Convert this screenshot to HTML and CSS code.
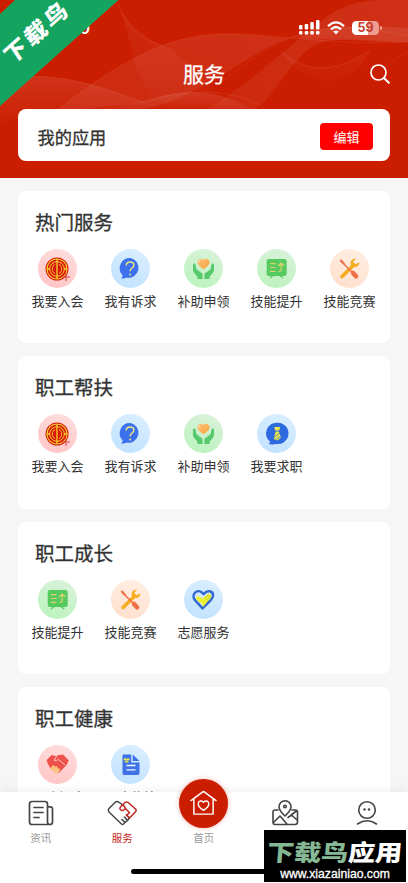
FILE: index.html
```html
<!DOCTYPE html>
<html lang="zh-CN">
<head>
<meta charset="utf-8">
<meta name="viewport" content="width=device-width, initial-scale=1">
<title>服务</title>
<link rel="stylesheet" href="styles.css">
</head>
<body>
<svg class="defs" aria-hidden="true">
  <defs>
    <linearGradient id="heartOrange" x1="0" y1="0" x2="1" y2="1"><stop offset="0" stop-color="#ffc078"/><stop offset="1" stop-color="#f9a23c"/></linearGradient>
    <symbol id="i-union" viewBox="0 0 39 39">
      <circle cx="19" cy="20" r="11.5" fill="#d8170c"/>
      <g fill="none" stroke="#f6d42c"><circle cx="19" cy="20" r="10" stroke-width="1.1"/><circle cx="19" cy="20" r="7.300" stroke-width="1"/><path d="M17 15.500c-3.500 1-3.500 8 0 9M21 15.500c3.500 1 3.500 8 0 9" stroke-width=".9"/><path d="M19 10v20M9 20h3M26 20h3" stroke-width="1.300"/></g>
      <path d="M28 24v8M24 28h8" stroke="#d94a45" stroke-width="1.100"/>
    </symbol>
    <symbol id="i-ask" viewBox="0 0 39 39">
      <path d="M19.500 9a10 10 0 1 1-4 19.600c-1.500.9-3.800 1.200-5.500.9 1-1 1.600-2 1.600-3.200A10.200 10.200 0 0 1 19.500 9z" fill="#3d70ec"/>
      <path d="M15.200 16.500c0-2.200 1.600-3.500 3.900-3.500s3.800 1.300 3.800 3.200c0 2.900-3.800 2.800-3.800 6.100" fill="none" stroke="#e9e77b" stroke-width="1.500"/><circle cx="19.100" cy="25.400" r="1" fill="#e9e77b"/>
    </symbol>
    <symbol id="i-aid" viewBox="0 0 39 39">
      <path d="M9 15.500c0-1.500 2.200-1.500 2.500 0l.8 4.300 4.500 3.200c1.300 1 1.800 2 1.800 3.700v3.200h-5.200v-2.200l-3.500-4.200c-.6-.7-.9-1.500-.9-2.400zM30 15.500c0-1.500-2.200-1.500-2.500 0l-.8 4.300-4.500 3.200c-1.300 1-1.800 2-1.800 3.700v3.200h5.200v-2.200l3.500-4.200c.6-.7.9-1.500.9-2.400z" fill="#55c96c"/>
      <path d="M12.500 19.500l4.300 4M26.500 19.500l-4.300 4" stroke="#c9f0cb" stroke-width=".8"/>
      <path d="M19.500 20.200c-3-2-6-4-6-6.900 0-3.600 4.300-4.700 6-2 1.700-2.700 6-1.600 6 2 0 2.900-3 4.900-6 6.900z" fill="url(#heartOrange)"/>
      <path d="M15 13.300c0-1 .5-1.700 1.300-1.900" stroke="#fff" stroke-width=".8" fill="none"/>
    </symbol>
    <symbol id="i-skill" viewBox="0 0 39 39">
      <rect x="9.700" y="10" width="20" height="17" rx="2.200" fill="#56c961"/>
      <path d="M17 26l-4.200 3M22 26l4.200 3" stroke="#56c961" stroke-width="1.200"/>
      <path d="M13 14.700h5.500M13 18.500h5.500M13 22.300h5.500M21.500 22.300h1.200c1 0 1.500-.5 1.500-1.500v-6M21.200 17l3-3 3 3" fill="none" stroke="#dcd46b" stroke-width="1.200"/>
    </symbol>
    <symbol id="i-tools" viewBox="0 0 39 39">
      <path d="M12 27.500L24 15.800" stroke="#f5ad20" stroke-width="3.600" stroke-linecap="round"/>
      <path d="M26.300 9.800c-3.500-.8-6.100 1.700-5.600 4.900.6 3.300 4.700 4.500 7.200 2.300 1.100-1 1.500-2.400 1.300-3.900l-3 2.100-2.200-.7-.7-2.100z" fill="#f5ad20"/>
      <path d="M11 12.300L22.500 23.500" stroke="#ef7046" stroke-width="1.600"/><path d="M9.700 11.200l1.700-.9 3.600 4.200-1 1-3.500-2.700z" fill="#ef7046"/>
      <path d="M23 24l3 3.200" stroke="#ef7046" stroke-width="4.600" stroke-linecap="round"/>
    </symbol>
    <symbol id="i-job" viewBox="0 0 39 39">
      <path d="M20.500 8.700a10.700 10.700 0 1 1-1.800 21.200c-2 .8-5.300.8-7.200.2 1-.6 1.500-1.400 1.400-2.600A10.700 10.700 0 0 1 20.500 8.700z" fill="#2d69df"/>
      <path d="M17.200 13h6l-1 3.500h-4z" fill="#efe748"/><path d="M18.700 17.500h3l2.200 5.700-3.200 3.300-4-1.500z" fill="#efe748"/><path d="M17 23.500l5-4M18.500 25.500l5-3" stroke="#2d69df" stroke-width=".7"/>
    </symbol>
    <symbol id="i-volunteer" viewBox="0 0 39 39">
      <path d="M18.500 28.300L11 20.200c-4.400-5.200 2-12.200 7.200-7.500l1.400 1.400c3.800-4.700 9.700-3.400 9.400 1.400-.1 2.300-1.900 4.300-3.700 6.200z" fill="#d3e8ff" stroke="#3269d1" stroke-width="2.500" stroke-linejoin="round"/>
      <path d="M11.500 17.500c2-2 4-1.200 6.500 1l6.500-5c1-.6 1.700.2 1.200 1 1-.4 1.600.5 1 1.200.9 0 1.200.8.6 1.500L19 27l-1-3.500c-2.500-.5-5-2.500-6.500-6z" fill="#efef32"/>
      <path d="M21 18l4-3.500M22 20l5-4M22.500 22.300l4-3.300" stroke="#9caf45" stroke-width=".6"/>
    </symbol>
    <symbol id="i-shake" viewBox="0 0 39 39">
      <path d="M8.700 15l5-5 4.500 1.200 2-.9 4.800-.8 5.800 6.100-2.300 4.300-7.200 7.600-3.500.5-6-5.500-2.300-4.500z" fill="#ee504b"/>
      <path d="M13.500 21.500l1.800-1.500 1.800 1.500 1.500-.6 1.600 2.300 1.500.3.500 2-3.700 3.500-6.300-5.300z" fill="#fdbd79"/>
      <path d="M18.500 11.500l-2.300 3.800c1.600 1.200 3 .3 4-.9l6.800 5.500M17 24l-2 2M19.500 25l-1.700 2.300" fill="none" stroke="#ffdad4" stroke-width=".9"/>
    </symbol>
    <symbol id="i-report" viewBox="0 0 39 39">
      <path d="M12.500 9.500h7.700v8h8.300v10.800c0 1-.7 1.700-1.700 1.700H13c-1 0-1.500-.7-1.500-1.700V10.500c0-.6.4-1 1-1z" fill="#3f73e5"/><path d="M21.700 9.500l6.800 6.500h-6.800z" fill="#3f73e5"/>
      <path d="M15.500 20.500h9M15.500 24.800h9" stroke="#f4f8ff" stroke-width="1.300"/>
      <path d="M15.700 18c-5-3.300-2.800-6.200 0-4.200 2.800-2 5 .9 0 4.200z" fill="#e5e957"/><path d="M13 15.500h2l.7 1 .8-1h2" fill="none" stroke="#5878a8" stroke-width=".7"/>
    </symbol>
  </defs>
</svg>

<div class="phone">
  <header class="header">
    <svg class="waves" viewBox="0 0 408 178" aria-hidden="true">
      <defs>
        <linearGradient id="wa" x1="0" y1="0" x2="0" y2="1"><stop offset="0" stop-color="#fff" stop-opacity=".1"/><stop offset="1" stop-color="#fff" stop-opacity=".02"/></linearGradient>
        <linearGradient id="wb" x1="1" y1="0" x2="0" y2="1"><stop offset="0" stop-color="#fff" stop-opacity=".09"/><stop offset="1" stop-color="#fff" stop-opacity=".05"/></linearGradient>
      </defs>
      <path d="M0 78C60 70 105 88 145 103C105 105 65 112 0 122z" fill="url(#wa)"/>
      <path d="M55 112C115 65 165 34 225 34C260 34 275 38 290 38C240 55 190 110 120 112z" fill="url(#wb)"/>
      <path d="M290 38C325 25 365 25 408 28V42C370 43 330 38 290 38z" fill="url(#wb)"/>
      <path d="M117 2C130 35 160 42 178 55C210 80 225 112 265 108C215 122 170 116 147 88C130 68 132 34 117 2z" fill="url(#wa)" opacity=".6"/>
      <path d="M204 112C260 75 290 45 325 18Q350 0 380 0H408V42C370 43 330 32 307 50C284 70 274 100 250 112z" fill="url(#wb)"/>
      <path d="M280 50C305 72 335 74 370 50C350 95 310 90 280 50z" fill="url(#wa)" opacity=".5"/>
      <path d="M110 110C170 92 205 83 250 108H110z" fill="url(#wa)"/>
      <g fill="none" stroke="#fff" stroke-opacity=".09" stroke-width=".8"><path d="M55 112C115 65 165 34 225 34S330 46 408 42"/><path d="M118 4C132 40 155 42 175 52"/><path d="M280 50C305 74 335 74 370 50"/><path d="M0 78C60 70 105 88 145 103Q170 92 204 92T265 108"/><path d="M219 84C255 55 285 35 318 30S380 30 408 36"/><path d="M385 70Q394 58 408 52"/></g>
    </svg>
    <div class="status">
      <span class="time">8:50</span>
      <div class="status-icons">
        <svg width="21" height="15" viewBox="0 0 21 15" fill="#fff"><rect x="0" y="5" width="3.500" height="4.500" rx="1"/><rect x="5.700" y="4" width="3.500" height="5.500" rx="1"/><rect x="11.300" y="2" width="3.500" height="7.500" rx="1"/><rect x="17" y="0" width="3.500" height="9.500" rx="1"/><rect x="0" y="11" width="3.500" height="3.500" rx="1"/><rect x="5.700" y="11" width="3.500" height="3.500" rx="1"/><rect x="11.300" y="11" width="3.500" height="3.500" rx="1"/><rect x="17" y="11" width="3.500" height="3.500" rx="1"/></svg>
        <svg width="18" height="14" viewBox="0 0 18 14"><g fill="none" stroke="#fff" stroke-width="2.300"><path d="M1 5.200Q9-2.500 17 5.200"/><path d="M4 8.300Q9 3.700 14 8.300"/></g><path d="M6.200 10.600Q9 8.400 11.800 10.600L9 13.500z" fill="#fff"/></svg>
        <div class="battery"><span>59</span></div>
      </div>
    </div>
    <div class="title-row">
      <h1>服务</h1>
      <svg class="search" viewBox="0 0 20 20"><circle cx="8.500" cy="8.500" r="7.500" fill="none" stroke="#fff" stroke-width="1.700"/><path d="M14 14l4.800 4.800" stroke="#fff" stroke-width="2" stroke-linecap="round"/></svg>
    </div>
    <div class="my-apps"><span>我的应用</span><button class="edit">编辑</button></div>
  </header>

  <main class="sections">
    <section class="card">
      <h2>热门服务</h2>
      <div class="grid">
        <div class="app"><svg class="disc pink"><use href="#i-union"/></svg><span>我要入会</span></div>
        <div class="app"><svg class="disc blue"><use href="#i-ask"/></svg><span>我有诉求</span></div>
        <div class="app"><svg class="disc green"><use href="#i-aid"/></svg><span>补助申领</span></div>
        <div class="app"><svg class="disc green"><use href="#i-skill"/></svg><span>技能提升</span></div>
        <div class="app"><svg class="disc peach"><use href="#i-tools"/></svg><span>技能竞赛</span></div>
      </div>
    </section>
    <section class="card">
      <h2>职工帮扶</h2>
      <div class="grid">
        <div class="app"><svg class="disc pink"><use href="#i-union"/></svg><span>我要入会</span></div>
        <div class="app"><svg class="disc blue"><use href="#i-ask"/></svg><span>我有诉求</span></div>
        <div class="app"><svg class="disc green"><use href="#i-aid"/></svg><span>补助申领</span></div>
        <div class="app"><svg class="disc blue"><use href="#i-job"/></svg><span>我要求职</span></div>
      </div>
    </section>
    <section class="card">
      <h2>职工成长</h2>
      <div class="grid">
        <div class="app"><svg class="disc green"><use href="#i-skill"/></svg><span>技能提升</span></div>
        <div class="app"><svg class="disc peach"><use href="#i-tools"/></svg><span>技能竞赛</span></div>
        <div class="app"><svg class="disc blue"><use href="#i-volunteer"/></svg><span>志愿服务</span></div>
      </div>
    </section>
    <section class="card">
      <h2>职工健康</h2>
      <div class="grid">
        <div class="app"><svg class="disc pink"><use href="#i-shake"/></svg><span>互助保障</span></div>
        <div class="app"><svg class="disc blue"><use href="#i-report"/></svg><span>工疗休检</span></div>
      </div>
    </section>
  </main>

  <nav class="tabs">
    <div class="tab"><svg viewBox="0 0 28 28" fill="none" stroke="#444" stroke-width="1.700" stroke-linecap="round" stroke-linejoin="round"><path d="M20.500 22.500V5Q20.500 2.500 18 2.500H5Q2.500 2.500 2.500 5v18Q2.500 25.500 5 25.500h18q2.500 0 2.500-2.500V10q0-2.200-2.200-2.200h-2.800M20.500 19v4q0 2.500 2.500 2.500M7 8.500h9M7 13.500h9M7 18.500h5"/></svg><span>资讯</span></div>
    <div class="tab active"><svg class="wide" viewBox="0 0 30 28" fill="none" stroke="#444" stroke-width="1.500" stroke-linejoin="round" stroke-linecap="round"><path d="M15 5.500L11.500 3Q9.500 2 8 3.500L2 9.500Q.7 11 2 13L14.500 25q1 .8 2 0l1.500-1.500-3-3M18 23.500l2.500-2-3-3.500M20.500 21.500l2-2.500-3-3"/><path d="M13.500 8L18 3.500q1.500-1.200 3.200 0L28.500 10q1.300 1.300 0 2.800l-6 6.200M13.500 8q-1.500 2.200.8 3.200 2 .8 4.200-1.700l4 4.300-3 2.200 3 3M16 5.500l2.500 4" stroke="#bd2720"/></svg><span>服务</span></div>
    <div class="tab home"><div class="home-disc"><svg viewBox="0 0 30 28" fill="none" stroke="#fff" stroke-width="1.500" stroke-linecap="round" stroke-linejoin="round"><path d="M2 11L15 1.500 28 11M5 9.500V25h20V9.500"/><path d="M15 21C5.500 15.500 10.500 8.500 15 12.800 19.500 8.500 24.500 15.500 15 21z"/></svg></div><span>首页</span></div>
    <div class="tab"><svg class="wide" viewBox="0 0 30 28" fill="none" stroke="#444" stroke-width="1.600" stroke-linecap="round" stroke-linejoin="round"><path d="M15 17Q9 11.500 9 7.800a6 6 0 0 1 12 0Q21 11.500 15 17zM8 11H5q-2 0-2 2v10q0 2.500 2 2.500h20q2.500 0 2.500-2.500V13q0-2-2-2H22M4 23l6-6 7 8M18 18.500l3.500-2.500 5.500 5M21 16l5.500-4"/><circle cx="15" cy="7.500" r="1.300"/></svg></div>
    <div class="tab"><svg viewBox="0 0 28 28" fill="none" stroke="#444" stroke-width="1.600" stroke-linecap="round"><circle cx="14" cy="11" r="8.300"/><path d="M4.500 25q9.500-6.500 19 0"/><g fill="#444" stroke="none"><circle cx="11.500" cy="10.500" r="1.200"/><circle cx="16" cy="10.500" r="1.200"/></g></svg></div>
  </nav>
  <div class="home-indicator"></div>
  <div class="ribbon"><span>下载鸟</span></div>
  <div class="watermark"><div class="brand"><b>下载鸟</b><b class="light">应用</b></div><div class="url">www.xiazainiao.com</div></div>
</div>
</body>
</html>
```
FILE: styles.css
```css
* { box-sizing: border-box; }
body { margin: 0; font-family: "Noto Sans CJK SC", "Liberation Sans", sans-serif; color: #333; }
h1, h2 { margin: 0; font-weight: 400; }
.defs { position: absolute; width: 0; height: 0; }
.phone { position: relative; width: 408px; height: 883px; overflow: hidden; background: #f6f6f6; }

.header { position: relative; height: 178px; padding: 0 18px; background: #cb1d00; overflow: hidden; }
.waves { position: absolute; inset: 0; width: 408px; height: 178px; }
.status { position: relative; height: 54px; padding: 20px 10px 0 36px; display: flex; justify-content: space-between; align-items: flex-start; }
.time { color: #fff; font: 600 16px/17px Inter, sans-serif; }
.status-icons { display: flex; align-items: center; gap: 7px; height: 15px; margin-right: 1px; }
.battery { position: relative; width: 27px; height: 14px; border-radius: 4.500px; background: linear-gradient(90deg, #fff 59%, #ee9d91 59%); display: flex; justify-content: center; font: 700 12.500px/14px Inter, sans-serif; color: #c93b2b; }
.battery::after { content: ""; position: absolute; left: 28px; top: 5px; width: 1.500px; height: 4px; border-radius: 1px; background: #ee9d91; }
.title-row { position: relative; height: 55px; padding-bottom: 18px; display: flex; align-items: center; justify-content: center; }
h1 { color: #fff; font-size: 21px; line-height: 30px; -webkit-text-stroke: .3px #fff; }
.search { position: absolute; right: 0; top: 10px; width: 20px; height: 20px; }
.my-apps { position: relative; height: 52px; border-radius: 8px; background: #fff; padding: 3px 17px 0 19.500px; display: flex; align-items: center; justify-content: space-between; font-size: 17.200px; -webkit-text-stroke: .3px #333; }
.my-apps span { margin-top: -1px; }
.edit { width: 53px; height: 27px; border: 0; border-radius: 4px; background: #fe0000; color: #fff; font: 13px/26px "Noto Sans CJK SC", sans-serif; padding: 0; -webkit-text-stroke: 0; }

.sections { padding: 13px 18px 0; display: flex; flex-direction: column; gap: 13px; }
.card { height: 152.300px; border-radius: 8px; background: #fff; padding: 16px 3.500px 0; flex: none; }
.card h2 { font-size: 19.500px; line-height: 30px; padding-left: 13.500px; -webkit-text-stroke: .3px #333; }
.grid { display: grid; grid-template-columns: repeat(5, 73px); margin-top: 12px; margin-left: -.5px; }
.app { display: flex; flex-direction: column; align-items: center; }
.app span { font-size: 13px; line-height: 18px; margin-top: 4px; white-space: nowrap; }
.disc { width: 39px; height: 39px; border-radius: 50%; }
.pink { background: linear-gradient(20deg, #ffc3c3, #ffdfdf); }
.blue { background: linear-gradient(20deg, #bfe1ff, #dcefff); }
.green { background: linear-gradient(20deg, #b9f3bb, #dcf2dc); }
.peach { background: linear-gradient(20deg, #ffdecb, #fff0e5); }

.tabs { position: absolute; left: 0; right: 0; top: 792px; height: 91px; background: #fff; display: grid; grid-template-columns: repeat(5, 81.500px); box-shadow: 0 -3px 8px rgba(0,0,0,.05); }
.tab { display: flex; flex-direction: column; align-items: center; padding-top: 7px; font-size: 10.500px; color: #999; }
.tab svg { width: 28px; height: 28px; }
.tab svg.wide { width: 30px; }
.tab span { line-height: 16px; margin-top: 3px; }
.tab.active { color: #c3231a; }
.tab.home { padding-top: 0; }
.home-disc { width: 49px; height: 49px; margin-top: -13px; border-radius: 50%; background: #cb1d00; display: flex; align-items: center; justify-content: center; box-shadow: 0 0 5px rgba(203,29,0,.3); }
.home .home-disc svg { width: 29px; height: 27px; }
.home span { margin-top: 2px; }
.home-indicator { position: absolute; left: 131px; top: 869px; width: 146px; height: 5px; border-radius: 3px; background: #000; }

.ribbon { position: absolute; left: 0; top: 0; width: 119px; height: 107px; background: #15a45f; clip-path: polygon(15px 0, 118.500px 0, 0 106px, 0 14px); }
.ribbon span { position: absolute; left: -14px; top: 15px; width: 98px; text-align: center; color: #fff; font-size: 24px; line-height: 34px; letter-spacing: 3px; text-indent: 3px; font-weight: 900; transform: rotate(-42deg) skewX(-8deg) scaleY(.9); }
.watermark { position: absolute; left: 264px; top: 830px; width: 142px; height: 52px; background: #000; color: #fff; text-align: center; }
.brand { height: 37px; font-size: 27px; line-height: 44px; color: #85b894; display: flex; justify-content: center; transform: skewX(-5deg) scaleY(.85); }
.brand b { font-weight: 900; }
.brand .light { color: #fff; }
.url { font: 12.200px/15px "Liberation Sans", sans-serif; -webkit-text-stroke: .3px #fff; }
```
